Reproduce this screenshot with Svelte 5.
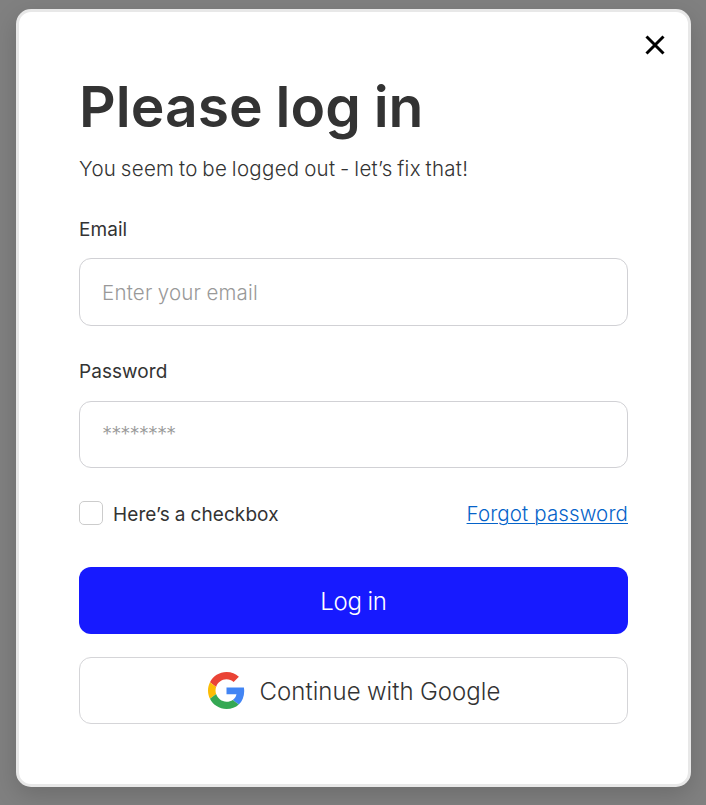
<script>
  let email = $state('');
  let password = $state('');
  let checked = $state(false);
</script>

<main class="backdrop">
  <div class="modal" role="dialog" aria-labelledby="title">
    <button class="close" aria-label="Close">
      <svg width="20" height="20" viewBox="0 0 20 20"><path d="M1.5 1.5 18.5 18.5M18.5 1.5 1.5 18.5" fill="none" stroke="#000" stroke-width="3" /></svg>
    </button>
    <h1 id="title"><span>Please log in</span></h1>
    <p class="intro"><span>You seem to be logged out - let’s fix that!</span></p>

    <form onsubmit={(e) => e.preventDefault()}>
      <label class="label email-label" for="email"><span>Email</span></label>
      <input class="field email" id="email" type="text" placeholder="Enter your email" bind:value={email} />
      <label class="label password-label" for="password"><span>Password</span></label>
      <input class="field password" id="password" type="password" placeholder="********" bind:value={password} />

      <div class="options">
        <label class="check">
          <input type="checkbox" bind:checked />
          <span>Here’s a checkbox</span>
        </label>
        <a href="#forgot">Forgot password</a>
      </div>

      <button class="btn primary" type="submit"><span>Log in</span></button>
      <button class="btn google" type="button">
        <svg width="37" height="37" viewBox="0 0 48 48" aria-hidden="true">
          <path fill="#EA4335" d="M24 9.5c3.54 0 6.71 1.22 9.21 3.6l6.85-6.85C35.9 2.38 30.47 0 24 0 14.62 0 6.51 5.38 2.56 13.22l7.98 6.19C12.43 13.72 17.74 9.5 24 9.5z" />
          <path fill="#4285F4" d="M46.98 24.55c0-1.57-.15-3.09-.38-4.55H24v9.02h12.94c-.58 2.96-2.26 5.48-4.78 7.18l7.73 6c4.51-4.18 7.09-10.36 7.09-17.65z" />
          <path fill="#FBBC05" d="M10.53 28.59c-.48-1.45-.76-2.99-.76-4.59s.27-3.14.76-4.59l-7.98-6.19C.92 16.46 0 20.12 0 24c0 3.88.92 7.54 2.56 10.78l7.97-6.19z" />
          <path fill="#34A853" d="M24 48c6.48 0 11.93-2.13 15.89-5.81l-7.73-6c-2.15 1.45-4.92 2.3-8.16 2.3-6.26 0-11.57-4.22-13.47-9.91l-7.98 6.19C6.51 42.62 14.62 48 24 48z" />
        </svg>
        <span>Continue with Google</span>
      </button>
    </form>
  </div>
</main>

<style>
  :global(body) {
    margin: 0;
  }

  .backdrop {
    box-sizing: border-box;
    height: 805px;
    padding: 9px 15px 18px 16px;
    overflow: hidden;
    background: #808080;
    font-family: Inter, 'Noto Sans', sans-serif;
    color: #333;
  }

  .modal {
    position: relative;
    box-sizing: border-box;
    height: 778px;
    padding: 60px 60px 0;
    border: 3px solid #e8e8e8;
    border-radius: 15px;
    background: #fff;
    box-shadow: 0 8px 24px rgba(0, 0, 0, 0.16);
  }

  .close {
    position: absolute;
    top: 23px;
    right: 23px;
    width: 20px;
    height: 20px;
    padding: 0;
    border: 0;
    background: none;
  }

  .close svg {
    display: block;
  }

  h1 {
    margin: 0;
    height: 70px;
    font-size: 57px;
    line-height: 70px;
    font-weight: 600;
    letter-spacing: 0;
    word-spacing: -1.5px;
    white-space: nowrap;
  }

  .intro {
    margin: 13px 0 0;
    font-size: 20.5px;
    line-height: 28px;
    font-weight: 300;
    letter-spacing: 0.3px;
    word-spacing: -1.4px;
    white-space: nowrap;
  }

  form {
    display: flex;
    flex-direction: column;
  }

  .label {
    height: 26px;
    font-size: 19px;
    line-height: 26px;
    letter-spacing: 0.05px;
  }

  .email-label {
    margin-top: 34px;
  }

  .password-label {
    margin-top: 33px;
  }

  .field {
    box-sizing: border-box;
    width: 100%;
    height: 68px;
    margin: 15px 0 0;
    padding: 0 22px;
    border: 1px solid #d1d1d5;
    border-radius: 12px;
    background: #fff;
    font: 300 20.5px Inter, 'Noto Sans', sans-serif;
    letter-spacing: 0.2px;
    word-spacing: -0.7px;
    outline: none;
  }

  .field::placeholder {
    color: #999;
    opacity: 1;
  }

  .password {
    height: 67px;
    margin-top: 16px;
    padding-bottom: 2px;
    letter-spacing: -1.1px;
  }

  .options {
    display: flex;
    justify-content: space-between;
    align-items: center;
    height: 28px;
    margin-top: 31px;
  }

  .check {
    display: flex;
    align-items: center;
    gap: 10px;
    font-size: 19px;
    line-height: 28px;
    letter-spacing: 0.1px;
    word-spacing: -0.5px;
  }

  .check span {
    padding-top: 3px;
  }

  .check input {
    appearance: none;
    box-sizing: border-box;
    width: 24px;
    height: 24px;
    margin: 0;
    border: 1px solid #ccc;
    border-radius: 5px;
    background: #fff;
  }

  a {
    padding-top: 2px;
    color: #0563c9;
    font-size: 20.5px;
    line-height: 28px;
    font-weight: 300;
    letter-spacing: 0.12px;
    text-decoration-thickness: 1px;
    text-underline-offset: 2px;
  }

  .btn {
    display: flex;
    align-items: center;
    justify-content: center;
    gap: 15px;
    box-sizing: border-box;
    height: 67px;
    padding: 0;
    border: 1px solid #d5d5d8;
    border-radius: 12px;
    background: #fff;
    color: #333;
    font: 300 24px Inter, 'Noto Sans', sans-serif;
    letter-spacing: 0.05px;
    word-spacing: -0.5px;
  }

  .btn span {
    padding-top: 2px;
  }

  .primary {
    margin-top: 40px;
    border: 0;
    background: #171aff;
    color: #fff;
    letter-spacing: -0.25px;
    word-spacing: -0.8px;
  }

  .google {
    margin-top: 23px;
    padding-left: 1px;
  }
</style>
